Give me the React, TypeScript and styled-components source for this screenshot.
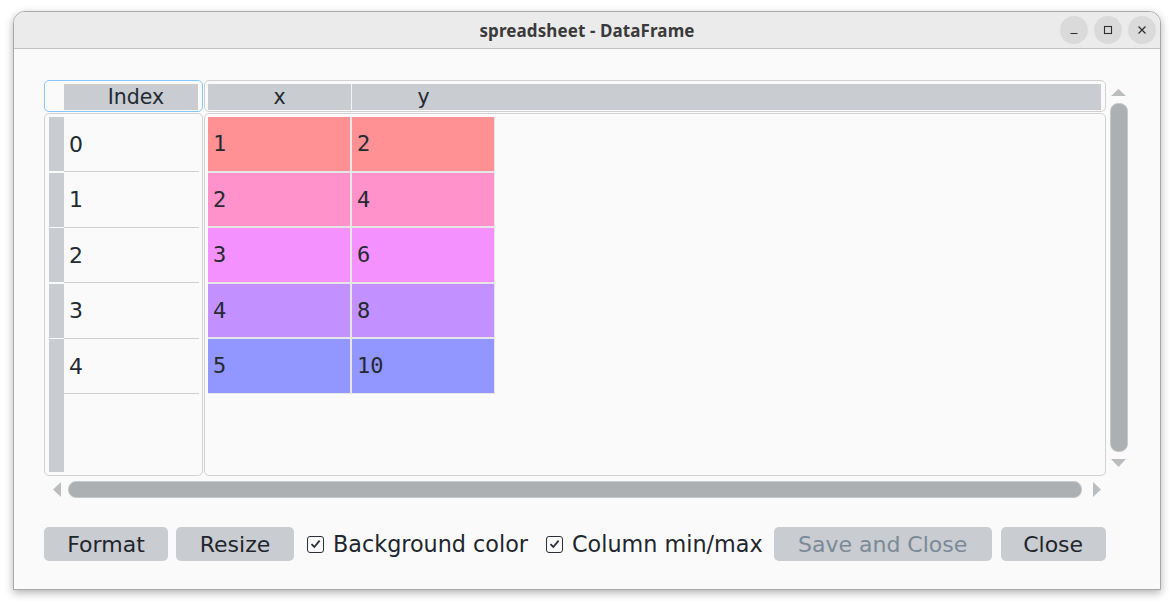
import React from "react";
import styled, { createGlobalStyle } from "styled-components";

const Global = createGlobalStyle`
  html, body { margin: 0; padding: 0; background: #ffffff; }
  body { font-family: "DejaVu Sans", "Liberation Sans", sans-serif; }
  * { box-sizing: border-box; }
`;

const Page = styled.div`
  padding: 11px 13px 0 13px;
  width: 1174px;
  height: 606px;
`;

const Window = styled.div`
  width: 1148px;
  height: 579px;
  border: 1px solid #a9a9a9;
  border-radius: 12px 12px 0 0;
  box-shadow: 0 3px 9px rgba(0, 0, 0, 0.3);
  background: #fafafa;
  display: flex;
  flex-direction: column;
  overflow: hidden;
`;

const TitleBar = styled.div`
  height: 37px;
  flex: none;
  background: #ebebeb;
  border-bottom: 1px solid #c2c2c2;
  display: grid;
  grid-template-columns: 1fr auto 1fr;
  align-items: center;
  padding: 0 4px 0 0;
`;

const Title = styled.div`
  grid-column: 2;
  font-family: "Noto Sans", "Open Sans", sans-serif;
  font-weight: 700;
  font-size: 17px;
  color: #3a3a3a;
  letter-spacing: 0.1px;
  padding-left: 4px;
`;

const Controls = styled.div`
  grid-column: 3;
  justify-self: end;
  display: flex;
  gap: 6px;
`;

const CtrlBtn = styled.div`
  width: 28px;
  height: 28px;
  border-radius: 50%;
  background: #dadada;
  display: flex;
  align-items: center;
  justify-content: center;
`;

const Content = styled.div`
  flex: 1;
  padding: 31px 33px 28px 30px;
  display: flex;
  flex-direction: column;
`;

const TableArea = styled.div`
  display: grid;
  grid-template-columns: 159px 902px 21px;
  grid-template-rows: 32px 363px 21px;
  column-gap: 1px;
  row-gap: 1px;
`;

const IndexHeader = styled.div`
  border: 1px solid #86c8f8;
  border-radius: 5px;
  padding: 3px 4px 1px 19px;
  display: flex;
`;

const DataHeader = styled.div`
  border: 1px solid #d2d2d2;
  border-radius: 5px;
  padding: 3px 4px 1px 3px;
  display: flex;
`;

const HeaderStrip = styled.div`
  flex: 1;
  background: #c9ccd0;
  display: flex;
`;

const HeaderCell = styled.div<{ $w?: number; $divider?: boolean; $shift?: number }>`
  ${(p) => (p.$w ? `width: ${p.$w}px;` : "flex: 1;")}
  flex-shrink: 0;
  display: flex;
  align-items: center;
  justify-content: center;
  font-size: 20.5px;
  color: #232a31;
  border-right: ${(p) => (p.$divider ? "1px solid #f4f4f4" : "none")};
  padding-left: ${(p) => p.$shift ?? 0}px;
  line-height: 1;
`;

const IndexBody = styled.div`
  border: 1px solid #d2d2d2;
  border-radius: 5px;
  padding: 3px 3px 3px 4px;
  display: flex;
  flex-direction: column;
`;

const IndexRow = styled.div`
  height: 55.5px;
  flex: none;
  display: flex;
`;

const Strip = styled.div<{ $joined?: boolean }>`
  width: 15px;
  flex: none;
  background: #c9ccd0;
  margin-bottom: ${(p) => (p.$joined ? "0" : "1.5px")};
`;

const IndexLabel = styled.div`
  flex: 1;
  border-bottom: 1.5px solid #cfcfcf;
  margin-bottom: 0.5px;
  display: flex;
  align-items: center;
  padding-left: 5px;
  font-size: 22px;
  color: #232a31;
`;

const Filler = styled.div`
  flex: 1;
  display: flex;
`;

const DataBody = styled.div`
  border: 1px solid #d2d2d2;
  border-radius: 5px;
  padding: 3px;
  display: flex;
  align-items: flex-start;
`;

const CellGrid = styled.div`
  display: grid;
  grid-template-columns: 142px 142px;
  grid-auto-rows: 53.5px;
  gap: 2px;
  background: #e6e6e6;
  padding: 0 1px 1px 0;
`;

const Cell = styled.div<{ $bg: string }>`
  background: ${(p) => p.$bg};
  display: flex;
  align-items: center;
  padding-left: 5px;
  font-family: "DejaVu Sans Mono", "Liberation Mono", monospace;
  font-size: 22px;
  color: #232a31;
`;

const VScroll = styled.div`
  grid-column: 3;
  grid-row: 1 / 3;
  padding: 9px 0 9px 3px;
  display: flex;
  flex-direction: column;
  align-items: stretch;
  gap: 7px;
`;

const HScroll = styled.div`
  grid-column: 1 / 3;
  grid-row: 3;
  padding: 4px 5px 0 9px;
  display: flex;
  align-items: center;
  gap: 7px;
`;

const Thumb = styled.div`
  flex: 1;
  background: #adb0b3;
  border: 1.5px solid #c6c9cc;
  border-radius: 8px;
  align-self: stretch;
`;

const HThumb = styled(Thumb)`
  flex: none;
  width: 1014px;
  height: 17px;
  margin-right: 4px;
`;

const Arrow = styled.svg`
  flex: none;
  display: block;
`;

const ButtonRow = styled.div`
  margin-top: 29px;
  display: flex;
  align-items: center;
`;

const Button = styled.div<{ $disabled?: boolean; $ml?: number; $w: number }>`
  width: ${(p) => p.$w}px;
  height: 34px;
  background: #c9ccd0;
  border-radius: 5px;
  display: flex;
  align-items: center;
  justify-content: center;
  font-size: 22px;
  color: ${(p) => (p.$disabled ? "#7b8a98" : "#1f262d")};
  margin-left: ${(p) => p.$ml ?? 0}px;
  white-space: nowrap;
  flex: none;
`;

const Check = styled.label<{ $ml?: number }>`
  display: flex;
  align-items: center;
  gap: 9px;
  font-size: 22.3px;
  color: #1f262d;
  margin-left: ${(p) => p.$ml ?? 0}px;
  white-space: nowrap;
`;

const Box = styled.span`
  width: 17px;
  height: 17px;
  border: 1.5px solid #2a2f35;
  border-radius: 3px;
  display: flex;
  align-items: center;
  justify-content: center;
  background: #fafafa;
`;

const colors = ["#ff9194", "#ff91cb", "#f591ff", "#c291ff", "#9296ff"];
const data = [
  [1, 2],
  [2, 4],
  [3, 6],
  [4, 8],
  [5, 10],
];

const CheckMark = () => (
  <svg width="11" height="10" viewBox="0 0 11 10">
    <path d="M1.5 5.2 L4.3 8 L9.6 1.6" fill="none" stroke="#2a2f35" strokeWidth="1.8" />
  </svg>
);

export default function App() {
  return (
    <Page>
      <Global />
      <Window>
        <TitleBar>
          <Title>spreadsheet - DataFrame</Title>
          <Controls>
            <CtrlBtn>
              <svg width="10" height="10" viewBox="0 0 10 10">
                <path d="M1.5 8.5 H8.5" stroke="#2e2e2e" strokeWidth="1.2" />
              </svg>
            </CtrlBtn>
            <CtrlBtn>
              <svg width="10" height="10" viewBox="0 0 10 10">
                <rect x="1.5" y="1.5" width="7" height="7" fill="none" stroke="#2e2e2e" strokeWidth="1.1" />
              </svg>
            </CtrlBtn>
            <CtrlBtn>
              <svg width="10" height="10" viewBox="0 0 10 10">
                <path d="M1.5 1.5 L8.5 8.5 M8.5 1.5 L1.5 8.5" stroke="#2e2e2e" strokeWidth="1.2" />
              </svg>
            </CtrlBtn>
          </Controls>
        </TitleBar>
        <Content>
          <TableArea>
            <IndexHeader>
              <HeaderStrip>
                <HeaderCell $shift={10}>Index</HeaderCell>
              </HeaderStrip>
            </IndexHeader>
            <DataHeader>
              <HeaderStrip>
                <HeaderCell $w={144} $divider>x</HeaderCell>
                <HeaderCell $w={143}>y</HeaderCell>
                <HeaderCell />
              </HeaderStrip>
            </DataHeader>
            <VScroll>
              <Arrow width="17" height="7" viewBox="0 0 17 7">
                <path d="M1 7 L8.5 0 L16 7 Z" fill="#babdc0" />
              </Arrow>
              <Thumb />
              <Arrow width="17" height="8" viewBox="0 0 17 8">
                <path d="M1 0 L8.5 8 L16 0 Z" fill="#babdc0" />
              </Arrow>
            </VScroll>
            <IndexBody>
              {data.map((_, i) => (
                <IndexRow key={i}>
                  <Strip $joined={i === data.length - 1} />
                  <IndexLabel>{i}</IndexLabel>
                </IndexRow>
              ))}
              <Filler>
                <Strip $joined />
              </Filler>
            </IndexBody>
            <DataBody>
              <CellGrid>
                {data.map((row, i) =>
                  row.map((v, j) => (
                    <Cell key={`${i}-${j}`} $bg={colors[i]}>
                      {v}
                    </Cell>
                  ))
                )}
              </CellGrid>
            </DataBody>
            <HScroll>
              <Arrow width="8" height="15" viewBox="0 0 8 15">
                <path d="M8 0 L0 7.5 L8 15 Z" fill="#babdc0" />
              </Arrow>
              <HThumb />
              <Arrow width="8" height="15" viewBox="0 0 8 15">
                <path d="M0 0 L8 7.5 L0 15 Z" fill="#babdc0" />
              </Arrow>
            </HScroll>
          </TableArea>
          <ButtonRow>
            <Button $w={124}>Format</Button>
            <Button $w={118} $ml={8}>Resize</Button>
            <Check $ml={13}>
              <Box>
                <CheckMark />
              </Box>
              Background color
            </Check>
            <Check $ml={18}>
              <Box>
                <CheckMark />
              </Box>
              Column min/max
            </Check>
            <Button $w={218} $disabled $ml={11}>
              Save and Close
            </Button>
            <Button $w={105} $ml={9}>Close</Button>
          </ButtonRow>
        </Content>
      </Window>
    </Page>
  );
}
